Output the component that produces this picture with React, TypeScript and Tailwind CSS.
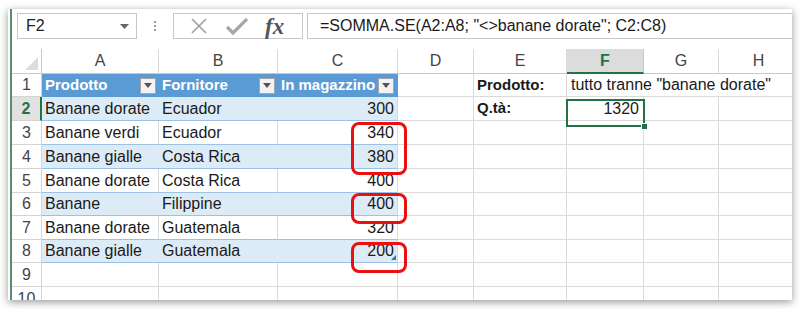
import React from 'react';

const rows: [string, string, number][] = [
  ['Banane dorate', 'Ecuador', 300],
  ['Banane verdi', 'Ecuador', 340],
  ['Banane gialle', 'Costa Rica', 380],
  ['Banane dorate', 'Costa Rica', 400],
  ['Banane', 'Filippine', 400],
  ['Banane dorate', 'Guatemala', 320],
  ['Banane gialle', 'Guatemala', 200],
];

const letters = ['A', 'B', 'C', 'D', 'E', 'F', 'G', 'H'];

function FilterButton() {
  return (
    <div className="ml-auto mr-[3px] w-[16px] h-[16px] bg-[#f3f3f3] border border-[#a6a6a6] flex items-center justify-center">
      <svg width="8" height="5" viewBox="0 0 8 5">
        <path d="M0 0 L8 0 L4 5 Z" fill="#555" />
      </svg>
    </div>
  );
}

function RowHeader({ n, active }: { n: number; active?: boolean }) {
  return active ? (
    <div className="flex items-center justify-center bg-[#e1e1e1] border-b border-[#d4d4d4] border-r-2 border-r-[#217346] text-[#217346] font-bold text-[16px]">
      {n}
    </div>
  ) : (
    <div className="flex items-center justify-center bg-white border-b border-r border-[#d4d4d4] text-[#444] text-[16px]">
      {n}
    </div>
  );
}

function Blank() {
  return <div className="bg-white border-b border-r border-[#dadada]" />;
}

export default function App() {
  return (
    <div
      className="relative w-[800px] h-[309px] bg-white overflow-hidden"
      style={{ fontFamily: '"Liberation Sans", Arial, sans-serif' }}
    >
      <div className="ml-[8px] mt-[9px] w-[784px] h-[291px] bg-white flex overflow-hidden shadow-[0_2px_8px_rgba(0,0,0,0.42)]">
        <div className="w-[2px] bg-white" />
        <div className="w-[2px] bg-[#5b8c6b]" />
        <div className="flex-1 flex flex-col overflow-hidden">
          {/* Formula bar */}
          <div className="mt-[4px] h-[30px] flex items-stretch">
            <div className="ml-[5px] w-[120px] border border-[#c6c6c6] flex items-center pl-[8px] pr-[7px] text-[16px] text-[#222]">
              F2
              <svg className="ml-auto" width="9" height="5" viewBox="0 0 9 5">
                <path d="M0 0 L9 0 L4.5 5 Z" fill="#666" />
              </svg>
            </div>
            <div className="w-[36px] flex flex-col items-center justify-center gap-[2px]">
              <div className="w-[2px] h-[2px] bg-[#9a9a9a]" />
              <div className="w-[2px] h-[2px] bg-[#9a9a9a]" />
              <div className="w-[2px] h-[2px] bg-[#9a9a9a]" />
            </div>
            <div className="w-[130px] border border-[#c6c6c6] flex items-center">
              <svg className="ml-[17px]" width="16" height="16" viewBox="0 0 16 16">
                <path d="M1 1 L15 15 M15 1 L1 15" stroke="#a0a0a0" strokeWidth="1.6" />
              </svg>
              <svg className="ml-[19px]" width="22" height="17" viewBox="0 0 22 17">
                <path d="M1 9 L7 15 L21 1" stroke="#a6a6a6" strokeWidth="3.2" fill="none" />
              </svg>
              <span
                className="ml-[17px] text-[23px] italic font-bold text-[#555] leading-none"
                style={{ fontFamily: '"Liberation Serif", "Times New Roman", serif' }}
              >
                fx
              </span>
            </div>
            <div className="ml-[4px] flex-1 border border-[#c6c6c6] border-r-0 flex items-center pl-[12px] text-[16px] text-[#1a1a1a] whitespace-nowrap">
              =SOMMA.SE(A2:A8; "&lt;&gt;banane dorate"; C2:C8)
            </div>
          </div>

          {/* Grid */}
          <div className="mt-[10px] grid grid-cols-[30px_117px_119px_120px_76px_93px_77px_75px_80px] grid-rows-[25px_23px_24px_24px_24px_24px_23px_24px_23px_24px_24px] text-[16px] text-[#1a1a1a]">
            {/* Column headers */}
            <div className="relative bg-white border-b border-r border-[#c8c8c8]">
              <svg className="absolute right-[3px] bottom-[3px]" width="13" height="13" viewBox="0 0 13 13">
                <path d="M13 0 L13 13 L0 13 Z" fill="#dcdcdc" />
              </svg>
            </div>
            {letters.map((l) =>
              l === 'F' ? (
                <div
                  key={l}
                  className="flex items-center justify-center bg-[#dcdcdc] border-b-2 border-b-[#217346] border-r border-r-[#c8c8c8] text-[#217346] font-bold text-[16px]"
                >
                  {l}
                </div>
              ) : (
                <div
                  key={l}
                  className="flex items-center justify-center bg-white border-b border-b-[#c8c8c8] border-r border-r-[#dadada] text-[#444] text-[16px]"
                >
                  {l}
                </div>
              )
            )}

            {/* Row 1 */}
            <RowHeader n={1} />
            <div className="flex items-center pl-[3px] bg-[#5b9bd5] text-white font-bold text-[15px]">
              Prodotto
              <FilterButton />
            </div>
            <div className="flex items-center pl-[3px] bg-[#5b9bd5] text-white font-bold text-[15px]">
              Fornitore
              <FilterButton />
            </div>
            <div className="flex items-center pl-[3px] bg-[#5b9bd5] text-white font-bold text-[15px] border-r border-[#5b9bd5]">
              In magazzino
              <FilterButton />
            </div>
            <Blank />
            <div className="flex items-center pl-[3px] bg-white border-b border-r border-[#dadada] font-bold text-[15px]">
              Prodotto:
            </div>
            <div className="col-span-3 flex items-center pl-[4px] bg-white border-b border-[#dadada] whitespace-nowrap">
              tutto tranne "banane dorate"
            </div>

            {/* Data rows */}
            {rows.map(([prod, forn, qty], i) => {
              const band = i % 2 === 0;
              return (
                <React.Fragment key={i}>
                  <RowHeader n={i + 2} active={i === 0} />
                  {band ? (
                    <>
                      <div className="flex items-center pl-[3px] bg-[#ddebf7] border-b border-[#9bc2e6]">{prod}</div>
                      <div className="flex items-center pl-[3px] bg-[#ddebf7] border-b border-[#9bc2e6]">{forn}</div>
                      <div className="relative flex items-center justify-end pr-[3px] bg-[#ddebf7] border-b border-b-[#9bc2e6] border-r border-r-[#c9d9e8]">
                        {qty}
                        {i === 6 && (
                          <svg className="absolute right-[1px] bottom-[2px]" width="5" height="5" viewBox="0 0 5 5">
                            <path d="M5 0 L5 5 L0 5 Z" fill="#2e75b6" />
                          </svg>
                        )}
                      </div>
                    </>
                  ) : (
                    <>
                      <div className="flex items-center pl-[3px] bg-white border-b border-b-[#9bc2e6] border-r border-r-[#dadada]">{prod}</div>
                      <div className="flex items-center pl-[3px] bg-white border-b border-b-[#9bc2e6] border-r border-r-[#dadada]">{forn}</div>
                      <div className="flex items-center justify-end pr-[3px] bg-white border-b border-b-[#9bc2e6] border-r border-r-[#dadada]">{qty}</div>
                    </>
                  )}
                  <Blank />
                  {i === 0 ? (
                    <>
                      <div className="flex items-center pl-[3px] bg-white border-b border-r border-[#dadada] font-bold text-[15px]">Q.tà:</div>
                      <div className="flex items-center justify-end pr-[4px] bg-white border-b border-r border-[#dadada]">1320</div>
                    </>
                  ) : (
                    <>
                      <Blank />
                      <Blank />
                    </>
                  )}
                  <Blank />
                  <Blank />
                </React.Fragment>
              );
            })}

            {/* Rows 9 and 10 */}
            {[9, 10].map((n) => (
              <React.Fragment key={n}>
                <RowHeader n={n} />
                {letters.map((l) => (
                  <Blank key={l} />
                ))}
              </React.Fragment>
            ))}
          </div>
        </div>
      </div>

      {/* Active cell F2 */}
      <div className="absolute left-[566px] top-[99px] w-[79px] h-[28px] border-2 border-[#217346]" />
      <div className="absolute left-[641px] top-[123px] w-[7px] h-[7px] bg-[#217346] border border-white" />

      {/* Red highlight boxes */}
      <div className="absolute left-[351px] top-[122px] w-[56px] h-[53px] border-[3px] border-[#ea1010] rounded-[8px]" />
      <div className="absolute left-[351px] top-[193px] w-[56px] h-[31px] border-[3px] border-[#ea1010] rounded-[8px]" />
      <div className="absolute left-[351px] top-[242px] w-[56px] h-[31px] border-[3px] border-[#ea1010] rounded-[8px]" />
    </div>
  );
}
